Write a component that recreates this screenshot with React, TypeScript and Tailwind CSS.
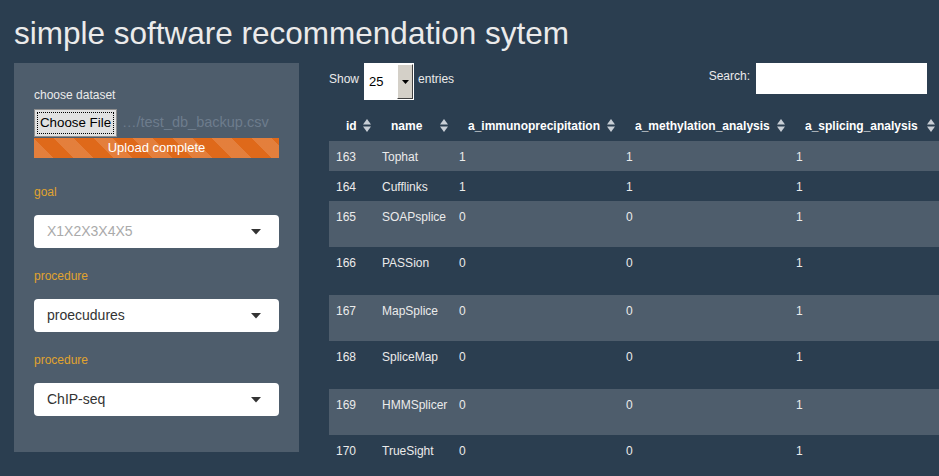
import { useState } from "react";

const rows = [
  { id: 163, name: "Tophat", a: 1, b: 1, c: 1, h: "h-[30px]" },
  { id: 164, name: "Cufflinks", a: 1, b: 1, c: 1, h: "h-[30px]" },
  { id: 165, name: "SOAPsplice", a: 0, b: 0, c: 1, h: "h-[46px]" },
  { id: 166, name: "PASSion", a: 0, b: 0, c: 1, h: "h-[48px]" },
  { id: 167, name: "MapSplice", a: 0, b: 0, c: 1, h: "h-[46px]" },
  { id: 168, name: "SpliceMap", a: 0, b: 0, c: 1, h: "h-[48px]" },
  { id: 169, name: "HMMSplicer", a: 0, b: 0, c: 1, h: "h-[46px]" },
  { id: 170, name: "TrueSight", a: 0, b: 0, c: 1, h: "h-[48px]" },
];

const headers = ["id", "name", "a_immunoprecipitation", "a_methylation_analysis", "a_splicing_analysis"];

function SortIcon() {
  return (
    <svg width="8" height="13" viewBox="0 0 8 13" className="shrink-0">
      <path d="M4 0 L8 5.5 L0 5.5 Z" fill="#c9cfd6" />
      <path d="M0 7.5 L8 7.5 L4 13 Z" fill="#c9cfd6" />
    </svg>
  );
}

function Caret() {
  return (
    <svg width="10" height="6" viewBox="0 0 10 6">
      <path d="M0 0 L10 0 L5 5.5 Z" fill="#333" />
    </svg>
  );
}

function Select({ value, placeholder }: { value: string; placeholder?: boolean }) {
  return (
    <div className="flex h-[33px] items-center justify-between rounded-[4px] bg-white pl-[13px] pr-[18px]">
      <span className={`text-[14px] ${placeholder ? "text-[#aaaaaa]" : "text-[#333333]"}`}>{value}</span>
      <Caret />
    </div>
  );
}

export default function App() {
  const [query, setQuery] = useState("");

  return (
    <div className="h-[476px] w-[939px] overflow-hidden bg-[#2b3e50] font-['Liberation_Sans',Arial,sans-serif] text-[#ebebeb]">
      <h1 className="pl-[14px] pt-[14px] text-[31.5px] leading-[38px] text-[#ebebeb]">
        simple software recommendation sytem
      </h1>

      <div className="mt-[11px] flex gap-[30px] pl-[14px]">
        {/* Sidebar */}
        <div className="h-[389px] w-[285px] shrink-0 bg-[#4e5d6c] px-[20px] pt-[25px]">
          <div className="text-[12px] leading-[14px] text-[#ebebeb]">choose dataset</div>
          <div className="mt-[7px] flex items-center">
            <button className="h-[28px] w-[83px] border border-[#8f8f8f] bg-[#e1e1e1] p-[2px] text-[13.33px] text-black">
              <span className="flex h-full w-full items-center justify-center border border-dotted border-black">
                Choose File
              </span>
            </button>
            <span className="ml-[5px] text-[14.5px] text-[#6d7c8c]">…/test_db_backup.csv</span>
          </div>
          <div className="mt-[1px] flex h-[20px] items-center justify-center bg-[#df691a] bg-[repeating-linear-gradient(45deg,rgba(255,255,255,0.15)_0_14px,transparent_14px_28px)] text-[13px] text-white">
            Upload complete
          </div>

          <div className="mt-[27px] text-[12px] leading-[14px] text-[#e0a32e]">goal</div>
          <div className="mt-[16px]">
            <Select value="X1X2X3X4X5" placeholder />
          </div>

          <div className="mt-[21px] text-[12px] leading-[14px] text-[#e0a32e]">procedure</div>
          <div className="mt-[16px]">
            <Select value="proecudures" />
          </div>

          <div className="mt-[21px] text-[12px] leading-[14px] text-[#e0a32e]">procedure</div>
          <div className="mt-[16px]">
            <Select value="ChIP-seq" />
          </div>
        </div>

        {/* Table area */}
        <div className="min-w-0 flex-1 overflow-hidden">
          <div className="flex items-start justify-between pr-[12px]">
            <div className="flex items-center text-[12px] text-[#ebebeb]">
              <span className="mb-[6px]">Show</span>
              <div className="ml-[5px] flex h-[37px] w-[50px] items-stretch bg-white p-[1px]">
                <span className="flex flex-1 items-center pl-[4px] text-[13px] text-black">25</span>
                <span className="flex w-[16px] items-center justify-center border border-t-white border-l-white border-r-[#404040] border-b-[#404040] bg-[#d4d0c8]">
                  <svg width="7" height="4" viewBox="0 0 7 4">
                    <path d="M0 0 L7 0 L3.5 4 Z" fill="#000" />
                  </svg>
                </span>
              </div>
              <span className="mb-[6px] ml-[4px]">entries</span>
            </div>
            <div className="flex items-center text-[12px] text-[#ebebeb]">
              <span className="mb-[6px]">Search:</span>
              <input
                value={query}
                onChange={(e) => setQuery(e.target.value)}
                className="ml-[6px] h-[31px] w-[171px] bg-white px-2 text-[13px] text-black outline-none"
              />
            </div>
          </div>

          <div className="mt-[10px] w-[700px]">
            <div className="grid h-[31px] grid-cols-[45px_77px_167px_170px_150px_1fr] items-center text-[12px] font-bold text-white">
              {headers.map((h) => (
                <div key={h} className="flex items-center justify-between pl-[17px] pr-[3px]">
                  <span>{h}</span>
                  <SortIcon />
                </div>
              ))}
              <div />
            </div>
            {rows.map((r, i) => (
              <div
                key={r.id}
                className={`grid ${r.h} grid-cols-[45px_77px_167px_170px_150px_1fr] pt-[9px] text-[12px] leading-[14px] text-[#ebebeb] ${
                  i % 2 === 0 ? "bg-[#4e5d6c]" : "bg-[#2b3e50]"
                }`}
              >
                <div className="pl-[7px]">{r.id}</div>
                <div className="pl-[8px]">{r.name}</div>
                <div className="pl-[8px]">{r.a}</div>
                <div className="pl-[8px]">{r.b}</div>
                <div className="pl-[8px]">{r.c}</div>
                <div />
              </div>
            ))}
          </div>
        </div>
      </div>
    </div>
  );
}
